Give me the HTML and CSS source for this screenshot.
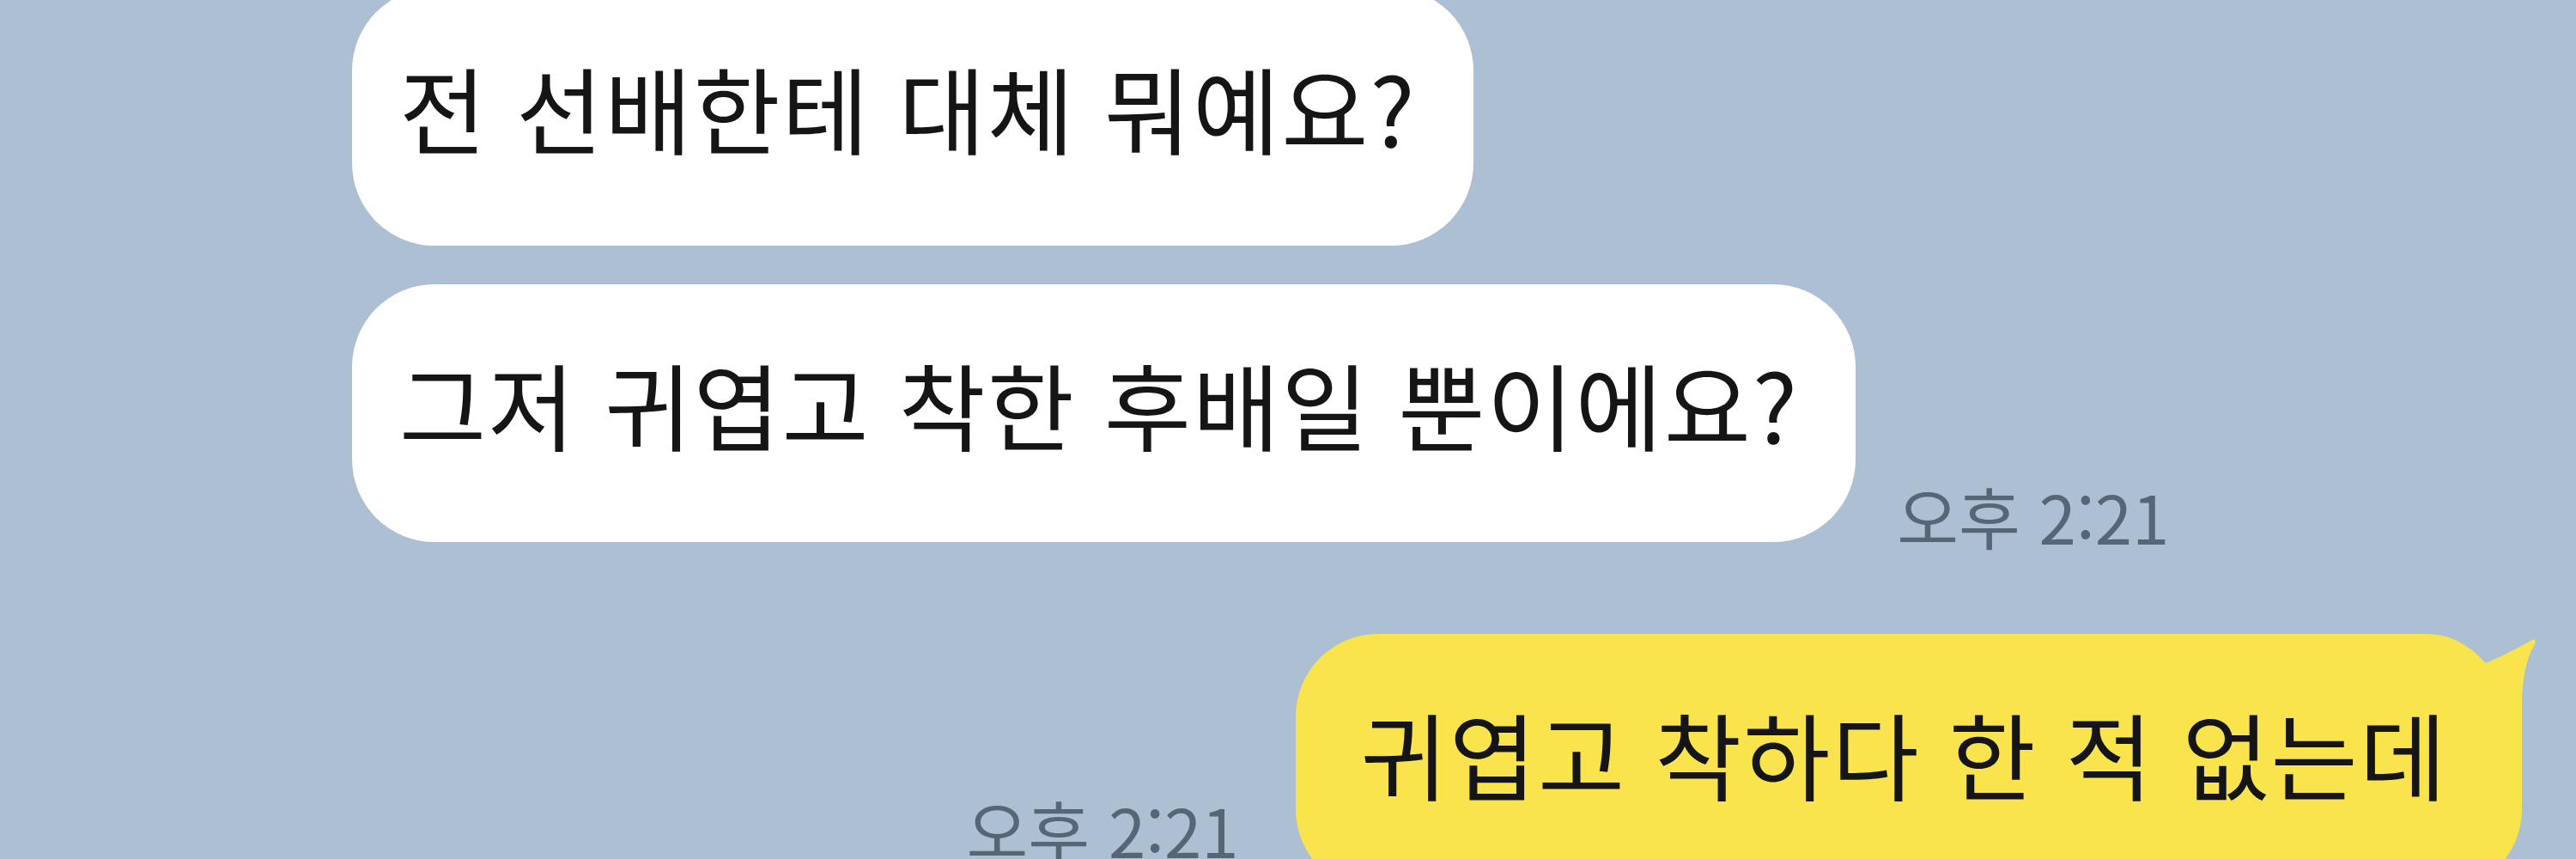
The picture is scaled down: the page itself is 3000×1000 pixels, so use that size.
FILE: index.html
```html
<!DOCTYPE html>
<html lang="ko">
<head>
  <meta charset="UTF-8">
  <meta name="viewport" content="width=device-width, initial-scale=1.0">
  <title>채팅</title>
  <link rel="stylesheet" href="styles.css">
</head>
<body>
  <div class="chat">
    <div class="group group-in">
      <div class="bubble bubble-in">전 선배한테 대체 뭐예요?</div>
      <div class="line">
        <div class="bubble bubble-in">그저 귀엽고 착한 후배일 뿐이에요?</div>
        <span class="time time-in">오후 2:21</span>
      </div>
    </div>

    <div class="line line-out">
      <span class="time time-out">오후 2:21</span>
      <div class="bubble bubble-out">
        귀엽고 착하다 한 적 없는데
        <svg class="tail" width="70" height="160" viewBox="0 0 70 160">
          <path d="M8,34 Q36,22 62,7 Q67,5 65,12 Q52,32 50,75 L50,160 L8,160 Z" fill="#f9e44e"/>
        </svg>
      </div>
    </div>
  </div>
</body>
</html>
```

FILE: styles.css
```css
body {
  margin: 0;
  padding: 0;
  height: 1000px;
  overflow: hidden;
  background-color: #adbfd2;
  font-family: 'Noto Sans CJK KR', 'Noto Sans', sans-serif;
}
.chat {
  display: flex;
  flex-direction: column;
  margin-top: -14px;
  padding: 0 63px 0 410px;
}
.group-in {
  display: flex;
  flex-direction: column;
  align-items: flex-start;
  gap: 45px;
}
.line {
  display: flex;
  align-items: flex-end;
  gap: 48px;
}
.line-out {
  justify-content: flex-end;
  gap: 66px;
  margin-top: 107px;
}
.bubble {
  position: relative;
  font-size: 110px;
  line-height: 126px;
  letter-spacing: 2px;
  color: #151515;
  white-space: nowrap;
  padding: 75px 66px 99px 55px;
  border-radius: 96px;
}
.bubble-in {
  background-color: #ffffff;
}
.bubble-out {
  background-color: #f9e44e;
  padding-left: 76px;
  padding-right: 86px;
  border-top-right-radius: 110px 160px;
}
.tail {
  position: absolute;
  top: 0;
  right: -20px;
}
.time {
  font-size: 78px;
  line-height: 1;
  color: #566676;
  white-space: nowrap;
}
.time-in {
  margin-bottom: -8px;
}
.time-out {
  margin-bottom: 34px;
}
```
